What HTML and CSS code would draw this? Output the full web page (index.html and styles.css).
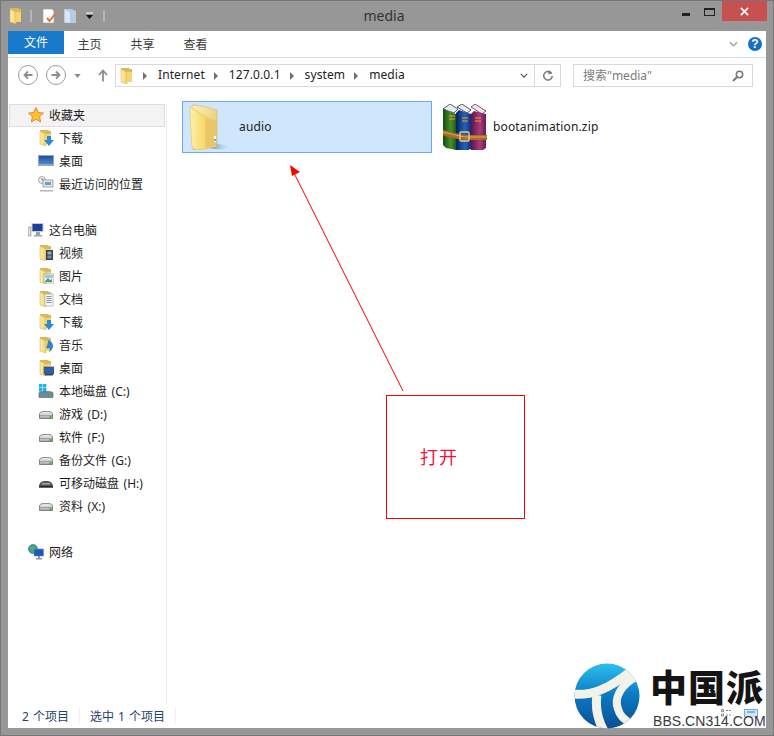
FILE: index.html
```html
<!DOCTYPE html>
<html lang="zh">
<head>
<meta charset="utf-8">
<title>media</title>
<link rel="stylesheet" href="styles.css">
</head>
<body>
<svg class="defs" width="0" height="0" aria-hidden="true">
  <defs>
    <linearGradient id="fy" x1="0" y1="0" x2="1" y2="0"><stop offset="0" stop-color="#fff0a8"/><stop offset="1" stop-color="#f2d06a"/></linearGradient>
    <linearGradient id="fb" x1="0" y1="0" x2="1" y2="1"><stop offset="0" stop-color="#fdf0b4"/><stop offset="1" stop-color="#e2c05c"/></linearGradient>
    <linearGradient id="ff" x1="0" y1="0" x2="1" y2="0"><stop offset="0" stop-color="#fff0a8"/><stop offset="1" stop-color="#f6d468"/></linearGradient>
    <linearGradient id="sh" x1="0" y1="0" x2="1" y2="0"><stop offset="0" stop-color="#5f7488" stop-opacity=".85"/><stop offset="1" stop-color="#cfe6fd" stop-opacity="0"/></linearGradient>
    <linearGradient id="mon" x1="0" y1="0" x2="0" y2="1"><stop offset="0" stop-color="#1f4f9c"/><stop offset="1" stop-color="#4d86cc"/></linearGradient>
    <linearGradient id="drv" x1="0" y1="0" x2="0" y2="1"><stop offset="0" stop-color="#f2f2f2"/><stop offset="1" stop-color="#a8a8a8"/></linearGradient>
    <linearGradient id="g1" x1="0" y1="0" x2="1" y2="0"><stop offset="0" stop-color="#184a10"/><stop offset=".6" stop-color="#46902a"/><stop offset="1" stop-color="#1f5a16"/></linearGradient>
    <linearGradient id="g2" x1="0" y1="0" x2="1" y2="0"><stop offset="0" stop-color="#06225f"/><stop offset=".6" stop-color="#2464b8"/><stop offset="1" stop-color="#0c2e78"/></linearGradient>
    <linearGradient id="g3" x1="0" y1="0" x2="1" y2="0"><stop offset="0" stop-color="#5c1448"/><stop offset=".6" stop-color="#a83c7c"/><stop offset="1" stop-color="#681a50"/></linearGradient>
    <linearGradient id="lg" x1="0" y1="0" x2="0" y2="1"><stop offset="0" stop-color="#2cc0ee"/><stop offset=".5" stop-color="#0a78c0"/><stop offset="1" stop-color="#0a4f96"/></linearGradient>
    <clipPath id="lc"><circle cx="33" cy="33" r="32.5"/></clipPath>
    <symbol id="folder" viewBox="0 0 16 16">
      <path d="M2 0h8l1 1h2v13H2z" fill="#d9b95c"/>
      <path d="M2 1l6 3v12l-6-2z" fill="url(#fy)" stroke="#c8a850" stroke-width=".5"/>
      <path d="M8 4h5v10H8z" fill="#f3d470"/>
    </symbol>
    <symbol id="drive" viewBox="0 0 16 16">
      <path d="M1.500 8C2 6 3 5.500 8 5.500S14 6 14.500 8v4.500h-13z" fill="url(#drv)" stroke="#6c6c6c" stroke-width=".8"/>
      <path d="M2 9.500h12" stroke="#8a8a8a" stroke-width=".6"/>
      <rect x="11.500" y="10" width="2" height="2" fill="#4cb034"/>
    </symbol>
  </defs>
</svg>

<div class="window">
  <header class="titlebar">
    <div class="qat">
      <svg class="ico" viewBox="0 0 16 16"><use href="#folder"/></svg>
      <span class="qat-sep"></span>
      <svg class="ico" viewBox="0 0 16 16"><path d="M2 1h9l2 2v12H2z" fill="#fdfdfd" stroke="#9a9a9a" stroke-width=".6"/><path d="M6 10l2.500 3L14 6" fill="none" stroke="#e0703c" stroke-width="2"/></svg>
      <svg class="ico" viewBox="0 0 16 16"><path d="M1 1h7l5 2v12H1z" fill="#b9cbe2"/><path d="M2 2l5 2v11l-5-1z" fill="#dce6f3"/></svg>
      <svg class="qat-drop" viewBox="0 0 9 8"><path d="M1 1h7" stroke="#fff" stroke-width="1"/><path d="M1 3h7L4.500 7z" fill="#111"/></svg>
      <span class="qat-sep"></span>
    </div>
    <div class="title">media</div>
    <div class="controls">
      <span class="min"></span>
      <span class="max"></span>
      <span class="close"><svg viewBox="0 0 10 10"><path d="M1 1l8 8M9 1l-8 8" stroke="#fff" stroke-width="1.800"/></svg></span>
    </div>
  </header>

  <div class="frame">
    <nav class="ribbon">
      <span class="tab tab-file">文件</span>
      <span class="tab">主页</span>
      <span class="tab">共享</span>
      <span class="tab">查看</span>
      <span class="ribbon-right">
        <svg class="chev" viewBox="0 0 10 6"><path d="M1 1l4 4 4-4" fill="none" stroke="#a0a0a0" stroke-width="1.500"/></svg>
        <span class="help">?</span>
      </span>
    </nav>

    <div class="navbar">
      <span class="round"><svg viewBox="0 0 12 12"><path d="M10.500 6H2.500M6 2.500L2.500 6 6 9.500" fill="none" stroke="#8c8c8c" stroke-width="1.800"/></svg></span>
      <span class="round fwd"><svg viewBox="0 0 12 12"><path d="M1.500 6h8M6 2.500L9.500 6 6 9.500" fill="none" stroke="#8c8c8c" stroke-width="1.800"/></svg></span>
      <svg class="hist" viewBox="0 0 8 5"><path d="M0 0h8L4 5z" fill="#8c8c8c"/></svg>
      <svg class="up" viewBox="0 0 10 12"><path d="M5 12V2M1 5.500L5 1l4 4.500" fill="none" stroke="#8c8c8c" stroke-width="1.800"/></svg>
      <div class="address">
        <svg class="ico" viewBox="0 0 16 16"><use href="#folder"/></svg>
        <span class="crumb-arrow first"></span><span class="crumb">Internet</span>
        <span class="crumb-arrow"></span><span class="crumb">127.0.0.1</span>
        <span class="crumb-arrow"></span><span class="crumb">system</span>
        <span class="crumb-arrow"></span><span class="crumb">media</span>
        <svg class="addr-drop" viewBox="0 0 10 6"><path d="M1 1l4 4 4-4" fill="none" stroke="#555" stroke-width="1.500"/></svg>
        <span class="refresh"><svg viewBox="0 0 12 12"><path d="M9.500 3.200A4.300 4.300 0 1 0 10.300 6" fill="none" stroke="#777" stroke-width="1.500"/><path d="M6.800 0l3.400 3.600-4 .6z" fill="#777"/></svg></span>
      </div>
      <div class="search">
        <span>搜索"media"</span>
        <svg viewBox="0 0 12 12"><circle cx="7.500" cy="4.500" r="3.200" fill="none" stroke="#777" stroke-width="1.500"/><path d="M5 7l-4 4" stroke="#777" stroke-width="2"/></svg>
      </div>
    </div>

    <div class="main">
      <aside class="sidebar">
        <div class="row top active">
          <svg class="ico" viewBox="0 0 16 16"><path d="M8 .5l2.300 5 5.200.6-3.900 3.500 1.100 5.400L8 12.300 3.300 15l1.100-5.400L.5 6.100l5.200-.6z" fill="#fbc02d" stroke="#e0762c" stroke-width=".8"/></svg>
          <span>收藏夹</span>
        </div>
        <div class="row sub">
          <svg class="ico" viewBox="0 0 16 16"><use href="#folder"/><path d="M9 6h4v4h3l-5 6-5-6h3z" fill="#2b8ad6"/></svg><span>下载</span>
        </div>
        <div class="row sub">
          <svg class="ico" viewBox="0 0 16 16"><rect x="0" y="2" width="16" height="11" fill="#9aa6b4"/><rect x="1" y="3" width="14" height="8" fill="url(#mon)"/></svg><span>桌面</span>
        </div>
        <div class="row sub">
          <svg class="ico" viewBox="0 0 16 16"><circle cx="4" cy="4" r="3.500" fill="#eee" stroke="#888" stroke-width=".7"/><path d="M4 2v2h2" fill="none" stroke="#555" stroke-width=".7"/><rect x="5" y="4" width="10" height="7" fill="#dfe5ec" stroke="#808a94" stroke-width=".7"/><rect x="7" y="6" width="6" height="3" fill="#6f9fc8"/><path d="M2 14h13v1.500H2z" fill="#b0b6bc"/></svg><span>最近访问的位置</span>
        </div>
        <div class="row gap"></div>
        <div class="row top">
          <svg class="ico" viewBox="0 0 16 16"><rect x="0" y="5" width="3" height="9" fill="#dadada" stroke="#777" stroke-width=".5"/><rect x="3.500" y="1" width="12" height="9" fill="#c5ccd4"/><rect x="4.500" y="2" width="10" height="7" fill="#1a3f9c"/><path d="M8 10h4v3h2v1.500H6V13h2z" fill="#9ca4ac"/></svg><span>这台电脑</span>
        </div>
        <div class="row sub">
          <svg class="ico" viewBox="0 0 16 16"><use href="#folder"/><rect x="8" y="5" width="7" height="10" fill="#3c4048"/><rect x="9.500" y="6.500" width="4" height="3" fill="#8fb0c8"/><rect x="9.500" y="10.500" width="4" height="3" fill="#6d8fa8"/></svg><span>视频</span>
        </div>
        <div class="row sub">
          <svg class="ico" viewBox="0 0 16 16"><use href="#folder"/><rect x="6" y="6" width="10" height="9" fill="#eef1f4" stroke="#8c97a2" stroke-width=".6"/><path d="M7 13l3-3 2 2 2-1v3H7z" fill="#5f9a6e"/><rect x="7" y="7" width="8" height="3" fill="#9fc6e4"/></svg><span>图片</span>
        </div>
        <div class="row sub">
          <svg class="ico" viewBox="0 0 16 16"><use href="#folder"/><rect x="7" y="3" width="8" height="12" fill="#f5f6f8" stroke="#97a0aa" stroke-width=".6"/><path d="M8.500 5.500h5M8.500 7.500h5M8.500 9.500h5M8.500 11.500h5" stroke="#7d93a8"/></svg><span>文档</span>
        </div>
        <div class="row sub">
          <svg class="ico" viewBox="0 0 16 16"><use href="#folder"/><path d="M9 6h4v4h3l-5 6-5-6h3z" fill="#2b8ad6"/></svg><span>下载</span>
        </div>
        <div class="row sub">
          <svg class="ico" viewBox="0 0 16 16"><use href="#folder"/><path d="M10 3c3 1 5 3 5 6s-2 5-4 6c1-2 1-3 0-4-1 .5-2 .5-3 0 1-2 2-5 2-8z" fill="#2b86d0"/></svg><span>音乐</span>
        </div>
        <div class="row sub">
          <svg class="ico" viewBox="0 0 16 16"><use href="#folder"/><rect x="6" y="7" width="10" height="7" fill="#2a62b0" stroke="#445" stroke-width=".6"/><rect x="7" y="14" width="8" height="1.500" fill="#444"/></svg><span>桌面</span>
        </div>
        <div class="row sub">
          <svg class="ico" viewBox="0 0 16 16"><path d="M1 1h3.400v3.400H1zM5 1h3.400v3.400H5zM1 5h3.400v3.400H1zM5 5h3.400v3.400H5z" fill="#16b4f0"/><path d="M1 10c.5-1.200 1.500-1.500 7-1.500s6.500.3 7 1.500v4.500H1z" fill="#6c8a9c" stroke="#55656f" stroke-width=".6"/><rect x="11.500" y="11" width="2" height="2" fill="#4cb034"/></svg><span>本地磁盘 (C:)</span>
        </div>
        <div class="row sub"><svg class="ico" viewBox="0 0 16 16"><use href="#drive"/></svg><span>游戏 (D:)</span></div>
        <div class="row sub"><svg class="ico" viewBox="0 0 16 16"><use href="#drive"/></svg><span>软件 (F:)</span></div>
        <div class="row sub"><svg class="ico" viewBox="0 0 16 16"><use href="#drive"/></svg><span>备份文件 (G:)</span></div>
        <div class="row sub">
          <svg class="ico" viewBox="0 0 16 16"><path d="M1 11c.5-3 2-5 7-5s6.500 2 7 5v1.500H1z" fill="#555"/><path d="M1 11h14v1.500H1z" fill="#222"/><path d="M4 8h8v1.500H4z" fill="#aaa"/></svg><span>可移动磁盘 (H:)</span>
        </div>
        <div class="row sub"><svg class="ico" viewBox="0 0 16 16"><use href="#drive"/></svg><span>资料 (X:)</span></div>
        <div class="row gap"></div>
        <div class="row top">
          <svg class="ico" viewBox="0 0 16 16"><circle cx="5" cy="5" r="4.500" fill="#3fae52" stroke="#2c7ec0" stroke-width=".8"/><path d="M2 3h4v3H3z" fill="#4aa0e0"/><rect x="6" y="5" width="9.500" height="7" fill="#1a5ac0" stroke="#7a8a9a" stroke-width=".6"/><path d="M10 12h2v2h2v1.500H8V14h2z" fill="#8a98a6"/></svg><span>网络</span>
        </div>
      </aside>

      <section class="files">
        <div class="file selected">
          <svg class="big" viewBox="0 0 44 46">
            <path d="M22 38l22 5c-6 3-16 3-24 1z" fill="url(#sh)"/>
            <path d="M3 1c8 0 18 3 25 5v33L4 46z" fill="url(#fb)" stroke="#d6b85e" stroke-width=".6"/>
            <path d="M1 3l16 10v32L7 46 3 43C2 30 1 15 1 3z" fill="url(#ff)" stroke="#e0c06a" stroke-width=".6"/>
            <path d="M17 13c4 2 8 3 10 3v27l-10 2z" fill="#e8c766"/>
            <rect x="25" y="32" width="2" height="6" fill="#fff"/>
            <circle cx="26" cy="36" r="1" fill="#3a8ed8"/>
          </svg>
          <span class="file-name">audio</span>
        </div>
        <div class="file zip">
          <svg class="big" viewBox="0 0 44 46">
            <path d="M0 5L7 0l8 5-4 4z" fill="#e8ebf2" stroke="#123" stroke-width=".7"/>
            <path d="M14 3l5-3 9 6-4 3z" fill="#e8ebf2" stroke="#113" stroke-width=".7"/>
            <path d="M28 3l4-3 11 7-4 3z" fill="#efe6ef" stroke="#412" stroke-width=".7"/>
            <path d="M0 5l13 5v36L3 44 0 41z" fill="url(#g1)"/>
            <path d="M13 9l3-3 12 4v35l-3 1H13z" fill="url(#g2)"/>
            <path d="M28 10l3-3 12 3v34l-3 2H28z" fill="url(#g3)"/>
            <path d="M6 12h6M6 15h6M19 14h6M19 17h6M32 14h6M32 17h6" stroke="#f2a020" stroke-width="1"/>
            <path d="M0 26c8 2 16 4 22 5h22v5H22C14 35 6 34 0 31z" fill="#a86c24"/>
            <path d="M0 28c8 2 16 4 22 5h22" fill="none" stroke="#d8a860" stroke-width="1"/>
            <rect x="17" y="28" width="9" height="9" rx="1" fill="none" stroke="#e8c890" stroke-width="1.400"/>
          </svg>
          <span class="file-name">bootanimation.zip</span>
        </div>
      </section>
    </div>

    <footer class="status">
      <span class="stat">2 个项目</span>
      <span class="stat-sep"></span>
      <span class="stat">选中 1 个项目</span>
      <span class="stat-sep"></span>
      <span class="views">
        <svg class="view-a" viewBox="0 0 12 8"><path d="M.5.500h2v2h-2zM.5 5h2v2h-2z" fill="none" stroke="#8a8a8a"/><path d="M5 1.500h6M5 6h6" stroke="#8a8a8a" stroke-dasharray="2 1"/></svg>
        <svg class="view-b" viewBox="0 0 14 8"><rect x=".5" y=".5" width="13" height="10" fill="#cfe6fd" stroke="#6eaae6"/><path d="M3 3h8" stroke="#4a7ab0"/></svg>
      </span>
    </footer>
  </div>

  <svg class="arrow" viewBox="0 0 774 736">
    <path d="M403 391L294 173" stroke="#f00" stroke-width="1" fill="none"/>
    <path d="M290 165l10 7-8 4z" fill="#f00"/>
  </svg>
  <div class="note"><span>打开</span></div>

  <div class="mark">
    <svg class="mark-logo" viewBox="0 0 66 66">
      <circle cx="33" cy="33" r="32.500" fill="url(#lg)"/>
      <g clip-path="url(#lc)" fill="none" stroke="#f2f1ea">
        <path d="M-2 31C18 33 34 26 56 9" stroke-width="9"/>
        <path d="M23 32C21 45 24 58 31 70" stroke-width="9"/>
        <path d="M62 14C46 22 40 36 44 46C46 54 52 58 58 61" stroke-width="8"/>
      </g>
    </svg>
    <div class="mark-text">
      <div class="mark-cn">中国派</div>
      <div class="mark-url">BBS.CN314.COM</div>
    </div>
  </div>
</div>
</body>
</html>
```

FILE: styles.css
```css
* { box-sizing: border-box; }
html, body { margin: 0; padding: 0; }
body {
  width: 774px;
  height: 736px;
  overflow: hidden;
  font-family: "Noto Sans", "Noto Sans CJK SC", sans-serif;
  font-size: 12px;
  color: #1e1e1e;
}
.defs { position: absolute; }
.ico { width: 16px; height: 16px; flex: none; display: block; }

.window {
  position: relative;
  width: 774px;
  height: 736px;
  display: flex;
  flex-direction: column;
  background: #979797;
  border: 1px solid #767676;
}

.titlebar {
  height: 30px;
  flex: none;
  display: flex;
  align-items: flex-start;
  position: relative;
}
.qat { display: flex; align-items: center; height: 30px; padding-left: 7px; }
.qat .ico:nth-of-type(2) { margin-left: 9px; }
.qat .ico:nth-of-type(3) { margin-left: 6px; }
.qat-sep { width: 2px; height: 12px; background: #b4b4b4; margin-left: 6px; }
.qat-drop { width: 9px; height: 8px; margin-left: 6px; }
.qat-drop + .qat-sep { margin-left: 9px; }
.title {
  position: absolute;
  left: 0;
  right: 0;
  top: 5px;
  padding-right: 6px;
  text-align: center;
  font-size: 14px;
  line-height: 20px;
  color: #333;
}
.controls { margin-left: auto; display: flex; padding-right: 6px; }
.min { width: 8px; height: 3px; background: #222; margin-top: 12px; margin-right: 14px; }
.max { width: 11px; height: 8px; border: 1px solid #222; border-top-width: 2px; margin-top: 7px; margin-right: 7px; }
.close { width: 45px; height: 20px; background: #c75050; display: flex; align-items: center; justify-content: center; }
.close svg { width: 9px; height: 9px; }

.frame {
  flex: 1;
  min-height: 0;
  margin: 0 7px 7px;
  background: #fff;
  display: flex;
  flex-direction: column;
}

.ribbon {
  height: 27px;
  flex: none;
  display: flex;
  align-items: flex-start;
  border-bottom: 1px solid #dadbdc;
  position: relative;
}
.tab { width: 53px; height: 26px; text-align: center; line-height: 28px; color: #3c3c3c; }
.tab-file { width: 56px; height: 23px; line-height: 23px; background: #1979ca; color: #fff; margin-right: -1px; }
.ribbon-right { margin-left: auto; display: flex; align-items: center; height: 26px; padding-right: 4px; }
.chev { width: 9px; height: 6px; margin-right: 10px; }
.help {
  width: 14px;
  height: 14px;
  border-radius: 50%;
  background: #1670c4;
  color: #fff;
  font: bold 12px/14px "Liberation Sans", sans-serif;
  text-align: center;
}

.navbar {
  height: 45px;
  flex: none;
  display: flex;
  align-items: flex-start;
  padding: 6px 12px 0 10px;
}
.round {
  width: 20px;
  height: 20px;
  margin-top: 1px;
  border: 1.500px solid #9c9c9c;
  border-radius: 50%;
  display: flex;
  align-items: center;
  justify-content: center;
}
.round svg { width: 12px; height: 12px; }
.fwd { margin-left: 8px; }
.hist { width: 7px; height: 4px; margin: 10px 0 0 8px; }
.up { width: 10px; height: 13px; margin: 5px 0 0 17px; }
.address {
  width: 446px;
  height: 23px;
  margin-left: 7px;
  border: 1px solid #d9d9d9;
  display: flex;
  align-items: center;
  padding: 0 0 0 3px;
  position: relative;
  font-size: 12px;
  color: #222;
}
.crumb { letter-spacing: .1px; margin-bottom: 2px; }
.crumb-arrow {
  width: 0;
  height: 0;
  border-left: 4px solid #707070;
  border-top: 4px solid transparent;
  border-bottom: 4px solid transparent;
  margin: 0 11px 0 9px;
}
.crumb-arrow.first { margin-left: 8px; }
.addr-drop { width: 8px; height: 5px; margin-left: auto; margin-right: 6px; }
.refresh {
  width: 26px;
  height: 21px;
  border-left: 1px solid #d9d9d9;
  display: flex;
  align-items: center;
  justify-content: center;
}
.refresh svg { width: 12px; height: 12px; }
.search {
  width: 180px;
  height: 23px;
  margin-left: 12px;
  border: 1px solid #d9d9d9;
  display: flex;
  align-items: center;
  justify-content: space-between;
  padding: 0 8px 0 9px;
  color: #7c7c7c;
}
.search span { margin-bottom: 2px; }
.search svg { width: 12px; height: 12px; }

.main { flex: 1; min-height: 0; display: flex; }
.sidebar {
  width: 159px;
  flex: none;
  height: 602px;
  border-right: 1px solid #eeeeee;
  padding-top: 1px;
}
.row {
  height: 23px;
  display: flex;
  align-items: center;
  white-space: nowrap;
  word-spacing: 1.500px;
  color: #1e1e1e;
}
.row span { margin-bottom: 2px; }
.row .ico { margin-bottom: 2px; }
.top { padding-left: 20px; }
.sub { padding-left: 30px; }
.row .ico { margin-right: 5px; }
.active { background: #f3f3f3; border: 1px solid #dedede; margin: 0 1px; padding-left: 18px; }

.files { flex: 1; display: flex; align-items: flex-start; padding: 0 0 0 15px; position: relative; }
.file {
  height: 52px;
  width: 250px;
  display: flex;
  align-items: center;
  padding-left: 6px;
  border: 1px solid transparent;
  margin-top: -2px;
}
.selected { background: #cfe6fd; border-color: #6eaae6; }
.big { width: 44px; height: 46px; flex: none; }
.file-name { margin: 0 0 2px 6px; color: #222; letter-spacing: .15px; }
.zip { width: 200px; padding-left: 10px; }

.status {
  height: 23px;
  flex: none;
  display: flex;
  align-items: center;
  padding: 0 8px 2px 14px;
  color: #24406e;
  word-spacing: 1px;
}
.stat-sep { width: 1px; height: 15px; background: #eceff2; margin: 0 10px; }
.views { margin-left: auto; align-self: flex-start; margin-top: 4px; display: flex; align-items: flex-start; }
.view-a { width: 12px; height: 8px; display: block; }
.view-b { width: 14px; height: 8px; display: block; margin-left: 11px; }

.arrow { position: absolute; left: -1px; top: -1px; width: 774px; height: 736px; pointer-events: none; }
.note {
  position: absolute;
  left: 385px;
  top: 394px;
  width: 139px;
  height: 124px;
  border: 1px solid #f00;
  padding: 48px 0 0 33px;
  font-size: 18px;
  line-height: 26px;
  letter-spacing: 1px;
  color: #f5123c;
}
.mark {
  position: absolute;
  left: 573px;
  top: 662px;
  width: 192px;
  height: 66px;
  display: flex;
}
.mark-logo { width: 66px; height: 66px; flex: none; }
.mark-text { margin-left: 10px; display: flex; flex-direction: column; }
.mark-cn {
  font-family: "Noto Sans CJK SC", sans-serif;
  font-weight: 900;
  font-size: 37px;
  line-height: 46px;
  letter-spacing: 1px;
  color: #141414;
  white-space: nowrap;
}
.mark-url {
  font-family: "Liberation Sans", sans-serif;
  font-size: 14px;
  line-height: 16px;
  letter-spacing: .05px;
  color: #3a3a3a;
  margin: 4px 0 0 3px;
  white-space: nowrap;
}
```
